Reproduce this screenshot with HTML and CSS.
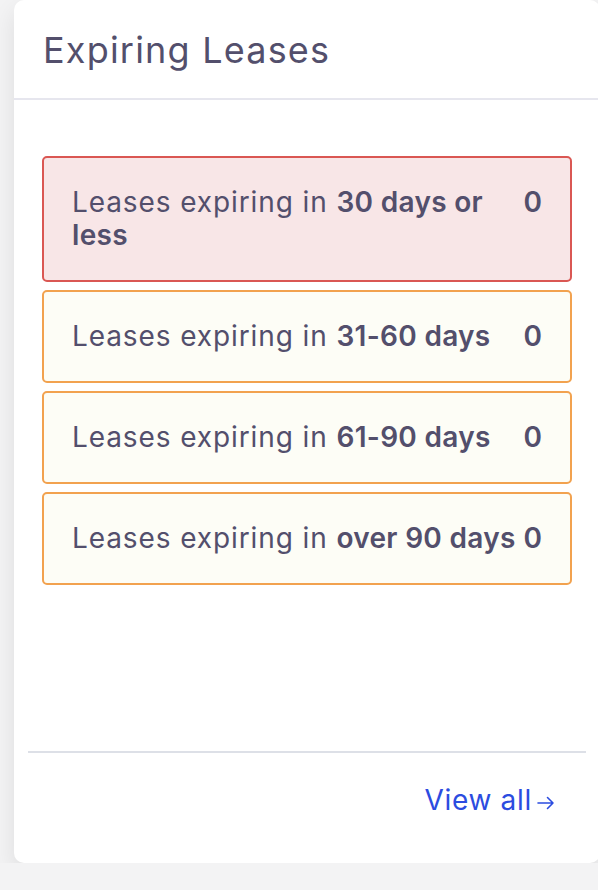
FILE: index.html
```html
<!DOCTYPE html>
<html lang="en">
<head>
<meta charset="utf-8">
<title>Expiring Leases</title>
<link rel="stylesheet" href="styles.css">
</head>
<body>
  <section class="card">
    <header class="card-header">
      <h2 class="card-title">Expiring Leases</h2>
    </header>
    <div class="card-body">
      <ul class="lease-list">
        <li class="lease lease-danger">
          <span class="lease-label">Leases expiring in <b>30 days or less</b></span>
          <span class="lease-count">0</span>
        </li>
        <li class="lease lease-warning">
          <span class="lease-label">Leases expiring in <b>31-60 days</b></span>
          <span class="lease-count">0</span>
        </li>
        <li class="lease lease-warning">
          <span class="lease-label">Leases expiring in <b>61-90 days</b></span>
          <span class="lease-count">0</span>
        </li>
        <li class="lease lease-warning">
          <span class="lease-label">Leases expiring in <b>over 90 days</b></span>
          <span class="lease-count">0</span>
        </li>
      </ul>
    </div>
    <footer class="card-footer">
      <a class="view-all" href="#">View all<svg class="arrow" width="18" height="14" viewBox="0 0 18 14" aria-hidden="true"><path d="M1 7H16M10.5 1.5L16 7L10.5 12.5" fill="none" stroke="currentColor" stroke-width="1.6" stroke-linecap="round" stroke-linejoin="round"/></svg></a>
    </footer>
  </section>
</body>
</html>
```

FILE: styles.css
```css
html {
  overflow: hidden;
}

body {
  margin: 0;
  padding: 0 0 0 14px;
  background: #f3f3f4;
  font-family: Inter, "Open Sans", "DejaVu Sans", sans-serif;
  color: #534f6c;
}

.card {
  width: 586px;
  height: 863px;
  box-sizing: border-box;
  background: #ffffff;
  border-radius: 10px;
  box-shadow: 0 10px 24px rgba(0, 0, 0, 0.09);
  display: flex;
  flex-direction: column;
}

.card-header {
  padding: 28px 29px 26px;
  border-bottom: 2px solid #e6e6ee;
}

.card-title {
  margin: 0;
  font-size: 36px;
  line-height: 44px;
  font-weight: 400;
  letter-spacing: 1.2px;
  color: #534f6c;
}

.card-body {
  flex: 1;
  padding: 56px 28px 0;
}

.lease-list {
  list-style: none;
  margin: 0;
  padding: 0;
  display: flex;
  flex-direction: column;
  gap: 8px;
}

.lease {
  display: flex;
  align-items: flex-start;
  justify-content: space-between;
  padding: 28px;
  border: 2px solid;
  border-radius: 5px;
  font-size: 28px;
  line-height: 33px;
  letter-spacing: 0.9px;
}

.lease b {
  font-weight: 600;
  letter-spacing: 0.3px;
}

.lease-label {
  flex: 1;
  min-width: 0;
}

.lease-count {
  font-weight: 600;
  letter-spacing: 0;
}

.lease-danger {
  border-color: #da5753;
  background: #f8e6e7;
}

.lease-warning {
  border-color: #f2a24f;
  background: #fdfdf6;
}

.card-footer {
  margin: 0 14px;
  border-top: 2px solid #dde0e7;
  padding: 31px 31px 46px;
  display: flex;
  justify-content: flex-end;
}

.view-all {
  display: flex;
  align-items: center;
  color: #2b4ce0;
  text-decoration: none;
  font-size: 28px;
  line-height: 33px;
  letter-spacing: 0.7px;
}

.arrow {
  margin-left: 5px;
  margin-top: 4px;
}
```
